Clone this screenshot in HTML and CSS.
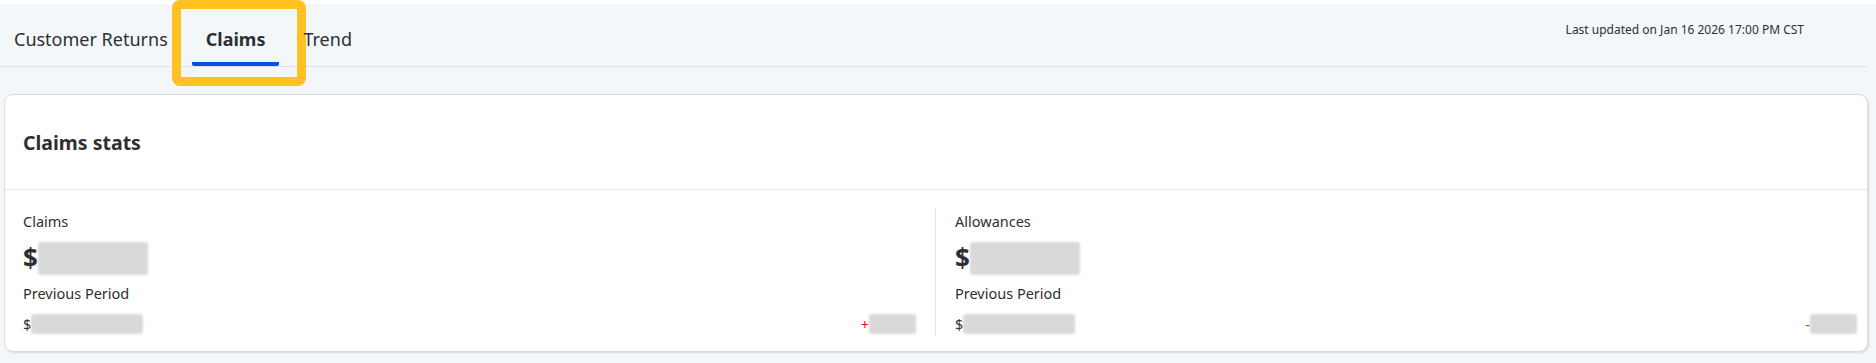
FILE: index.html
```html
<!DOCTYPE html>
<html lang="en">
<head>
    <meta charset="UTF-8">
    <meta name="viewport" content="width=device-width, initial-scale=1.0">
    <title>Claims</title>
    <link rel="stylesheet" href="styles.css">
</head>
<body>

<div class="page">
    <!-- Tabs -->
    <div class="tabs-row">
        <nav class="tabs">
            <div class="tab">Customer Returns</div>
            <div class="tab active">
                Claims
                <span class="highlight"></span>
            </div>
            <div class="tab">Trend</div>
        </nav>
        <div class="updated">Last updated on Jan 16 2026 17:00 PM CST</div>
    </div>

    <!-- Stats card -->
    <div class="card">
        <div class="card-header">
            <h2>Claims stats</h2>
        </div>
        <div class="card-body">
            <div class="stat">
                <div class="stat-label">Claims</div>
                <div class="stat-value">$<span class="blur big"></span></div>
                <div class="stat-label">Previous Period</div>
                <div class="stat-prev">
                    <span class="prev-amount">$<span class="blur small"></span></span>
                    <span class="change up">+<span class="blur tiny"></span></span>
                </div>
            </div>
            <div class="stat">
                <div class="stat-label">Allowances</div>
                <div class="stat-value">$<span class="blur big"></span></div>
                <div class="stat-label">Previous Period</div>
                <div class="stat-prev">
                    <span class="prev-amount">$<span class="blur small"></span></span>
                    <span class="change down">-<span class="blur tiny"></span></span>
                </div>
            </div>
        </div>
    </div>
</div>

</body>
</html>
```

FILE: styles.css
```css
body {
    font-family: "Noto Sans", Arial, sans-serif;
    background-color: #ffffff;
    color: #2e2f32;
    margin: 0;
    padding: 0;
}
.page {
    margin-top: 4px;
    background-color: #f4f7fa;
    height: 359px;
    padding: 0 8px 0 0;
}
.tabs-row {
    display: flex;
    justify-content: space-between;
    align-items: flex-start;
    border-bottom: 1px solid #dde1e6;
    height: 62px;
}
.tabs {
    display: flex;
    gap: 10px;
    height: 100%;
}
.tab {
    position: relative;
    display: flex;
    align-items: center;
    padding: 8px 14px 0;
    font-size: 18px;
    color: #2e2f32;
    box-sizing: border-box;
    height: 100%;
}
.tab.active {
    font-weight: bold;
    border-bottom: 4px solid #0053e2;
    border-radius: 2px;
    padding-top: 12px;
}
.highlight {
    position: absolute;
    left: -20px;
    right: -27px;
    top: -4px;
    bottom: -24px;
    border: 9px solid #ffc220;
    border-radius: 8px;
}
.updated {
    font-size: 12px;
    padding: 17px 64px 0 0;
    color: #2e2f32;
}
.card {
    margin: 27px 0 0 4px;
    background-color: #ffffff;
    border: 1px solid #d9dde2;
    border-radius: 9px;
    box-shadow: 1px 1px 2px rgba(0, 0, 0, 0.12);
    height: 258px;
    box-sizing: border-box;
}
.card-header {
    height: 94px;
    display: flex;
    align-items: center;
    padding: 0 18px;
    border-bottom: 1px solid #e6e8eb;
}
.card-header h2 {
    margin: 0;
    font-size: 19.5px;
    font-weight: bold;
}
.card-body {
    display: grid;
    grid-template-columns: 912px 1fr;
    padding: 21px 0 0 18px;
}
.stat {
    display: flex;
    flex-direction: column;
    padding-right: 19px;
}
.stat + .stat {
    border-left: 1px solid #e3e5e8;
    padding-left: 19px;
    padding-right: 10px;
    margin-top: -2px;
    padding-top: 2px;
    margin-bottom: 2px;
}
.stat-label {
    font-size: 14.5px;
    line-height: 20px;
}
.stat-value {
    display: flex;
    align-items: center;
    font-size: 26px;
    font-weight: bold;
    height: 34px;
    margin: 10px 0 8px;
}
.stat-prev {
    display: flex;
    justify-content: space-between;
    align-items: center;
    font-size: 14.5px;
    height: 22px;
    margin-top: 10px;
}
.prev-amount, .change {
    display: flex;
    align-items: center;
}
.blur {
    display: inline-block;
    background-color: #d9d9d9;
    border-radius: 3px;
    filter: blur(1px);
}
.blur.big {
    width: 110px;
    height: 33px;
}
.blur.small {
    width: 112px;
    height: 20px;
}
.blur.tiny {
    width: 47px;
    height: 20px;
}
.change.up {
    color: #ea1100;
}
.change.down {
    color: #2a8703;
}
```
